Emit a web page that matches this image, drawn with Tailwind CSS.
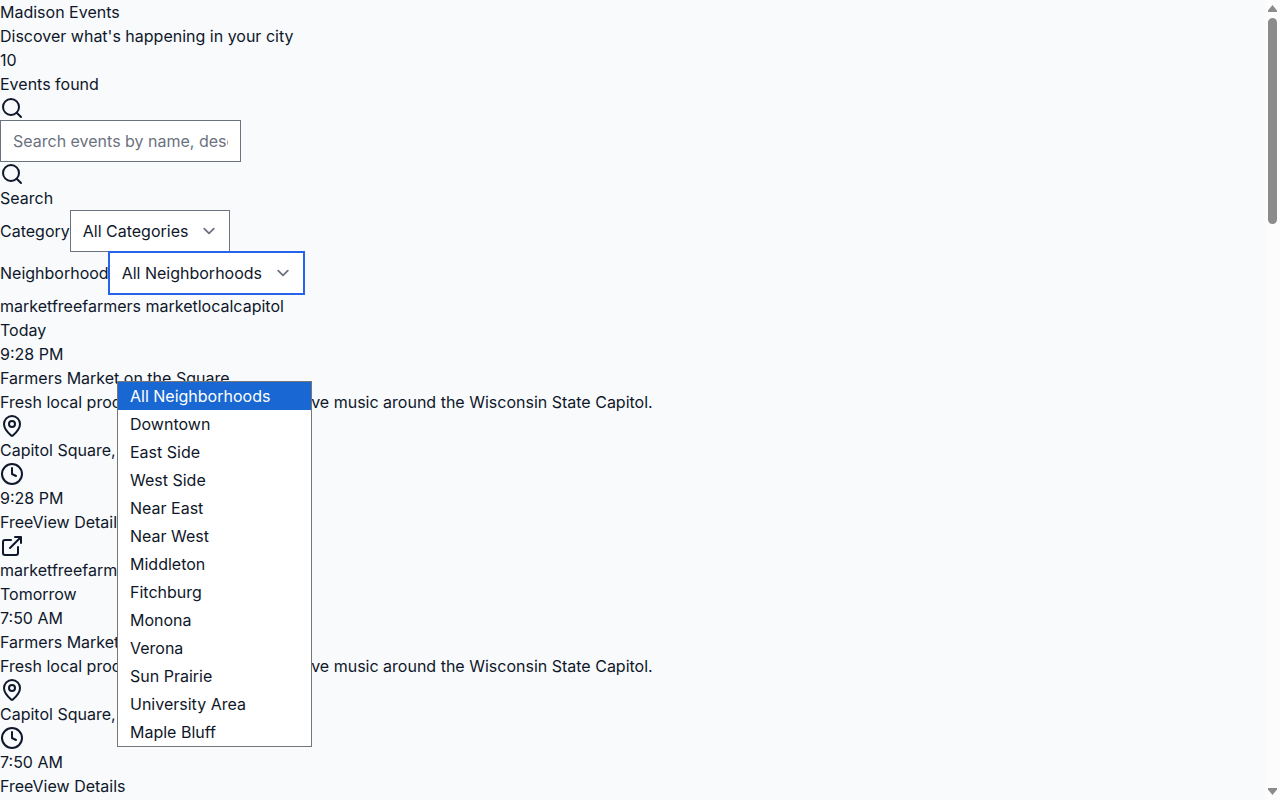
<!DOCTYPE html>
<html lang="en">
<head>
<meta charset="utf-8">
<meta name="viewport" content="width=device-width, initial-scale=1">
<title>Madison Events</title>
<script src="https://cdn.jsdelivr.net/npm/@tailwindcss/browser@4"></script>
</head>
<body class="relative flex h-screen overflow-hidden bg-[#f8fafc] font-['Inter',sans-serif] text-base text-[#0f172a]">
<svg class="hidden" aria-hidden="true">
  <symbol id="search" viewBox="0 0 24 24"><circle cx="11" cy="11" r="8"/><path d="m21 21-4.300-4.300"/></symbol>
  <symbol id="pin" viewBox="0 0 24 24"><path d="M20 10c0 4.993-5.539 10.193-7.399 11.799a1 1 0 0 1-1.202 0C9.539 20.193 4 14.993 4 10a8 8 0 0 1 16 0"/><circle cx="12" cy="10" r="3"/></symbol>
  <symbol id="clock" viewBox="0 0 24 24"><circle cx="12" cy="12" r="10"/><path d="M12 6v6l4 2"/></symbol>
  <symbol id="external" viewBox="0 0 24 24"><path d="M15 3h6v6M10 14 21 3M18 13v6a2 2 0 0 1-2 2H5a2 2 0 0 1-2-2V8a2 2 0 0 1 2-2h6"/></symbol>
  <symbol id="chevron" viewBox="0 0 20 20"><path d="m6 8 4 4 4-4"/></symbol>
</svg>

<div class="min-w-0 flex-1 overflow-hidden">
  <header>
    <h1>Madison Events</h1>
    <p>Discover what's happening in your city</p>
    <div>10</div>
    <div>Events found</div>
  </header>

  <main>
    <form>
      <label for="query" aria-label="Search events" class="block"><svg class="size-6 fill-none stroke-current stroke-2 [stroke-linecap:round] [stroke-linejoin:round]"><use href="#search"/></svg></label>
      <input id="query" type="text" placeholder="Search events by name, description, or venue..." class="block w-[241px] border border-[#6b7280] bg-white px-3 py-2 leading-6 placeholder:text-[#6b7280]">
      <button type="button" class="block text-left"><svg class="size-6 fill-none stroke-current stroke-2 [stroke-linecap:round] [stroke-linejoin:round]"><use href="#search"/></svg>Search</button>

      <div class="flex items-center">
        <label for="category">Category</label>
        <div class="relative">
          <select id="category" class="block appearance-none border border-[#6b7280] bg-white py-2 pr-10 pl-3 leading-6"><option>All Categories</option></select>
          <svg class="pointer-events-none absolute inset-y-0 right-[9px] my-auto size-6 fill-none stroke-[#6b7280] stroke-[1.5] [stroke-linecap:round] [stroke-linejoin:round]"><use href="#chevron"/></svg>
        </div>
      </div>

      <div class="flex items-center">
        <label for="neighborhood">Neighborhood</label>
        <div class="relative">
          <select id="neighborhood" class="block appearance-none border border-[#2563eb] bg-white py-2 pr-10 pl-3 leading-6 ring-1 ring-[#2563eb] outline-none"><option>All Neighborhoods</option><option>Downtown</option><option>East Side</option><option>West Side</option><option>Near East</option><option>Near West</option><option>Middleton</option><option>Fitchburg</option><option>Monona</option><option>Verona</option><option>Sun Prairie</option><option>University Area</option><option>Maple Bluff</option></select>
          <svg class="pointer-events-none absolute inset-y-0 right-[9px] my-auto size-6 fill-none stroke-[#6b7280] stroke-[1.5] [stroke-linecap:round] [stroke-linejoin:round]"><use href="#chevron"/></svg>
        </div>
      </div>
    </form>

    <article>
      <div><span>market</span><span>free</span><span>farmers market</span><span>local</span><span>capitol</span></div>
      <div>Today</div>
      <div>9:28 PM</div>
      <h2>Farmers Market on the Square</h2>
      <p>Fresh local produce, artisan goods, and live music around the Wisconsin State Capitol.</p>
      <svg class="size-6 fill-none stroke-current stroke-2 [stroke-linecap:round] [stroke-linejoin:round]"><use href="#pin"/></svg>
      <div>Capitol Square, Downtown</div>
      <svg class="size-6 fill-none stroke-current stroke-2 [stroke-linecap:round] [stroke-linejoin:round]"><use href="#clock"/></svg>
      <div>9:28 PM</div>
      <div><span>Free</span><a href="#">View Details<svg class="size-6 fill-none stroke-current stroke-2 [stroke-linecap:round] [stroke-linejoin:round]"><use href="#external"/></svg></a></div>
    </article>

    <article>
      <div><span>market</span><span>free</span><span>farmers market</span><span>local</span><span>capitol</span></div>
      <div>Tomorrow</div>
      <div>7:50 AM</div>
      <h2>Farmers Market on the Square</h2>
      <p>Fresh local produce, artisan goods, and live music around the Wisconsin State Capitol.</p>
      <svg class="size-6 fill-none stroke-current stroke-2 [stroke-linecap:round] [stroke-linejoin:round]"><use href="#pin"/></svg>
      <div>Capitol Square, Downtown</div>
      <svg class="size-6 fill-none stroke-current stroke-2 [stroke-linecap:round] [stroke-linejoin:round]"><use href="#clock"/></svg>
      <div>7:50 AM</div>
      <div><span>Free</span><a href="#">View Details<svg class="size-6 fill-none stroke-current stroke-2 [stroke-linecap:round] [stroke-linejoin:round]"><use href="#external"/></svg></a></div>
    </article>
  </main>
</div>

<!-- Page scrollbar -->
<div class="flex w-[15px] shrink-0 flex-col items-center bg-[#fcfcfc] pt-1 pb-1" aria-hidden="true">
  <svg class="h-[9px] w-[9px] shrink-0 fill-[#8b8b8b]" viewBox="0 0 9 9"><path d="M4.500 1 9 6.500V8H0V6.500Z"/></svg>
  <div class="mt-[5px] h-[206px] w-[9px] shrink-0 rounded-full bg-[#8b8b8b]"></div>
  <svg class="mt-auto h-[9px] w-[9px] shrink-0 fill-[#8b8b8b]" viewBox="0 0 9 9"><path d="M0 1h9v1.500L4.500 8 0 2.500Z"/></svg>
</div>

<!-- Open neighborhood list -->
<ul role="listbox" aria-label="Neighborhood" class="absolute top-[381px] left-[117px] w-[195px] border border-[#767676] bg-white leading-7">
  <li role="option" aria-selected="true" class="bg-[#1967d2] px-3 text-white">All Neighborhoods</li>
  <li role="option" class="px-3">Downtown</li>
  <li role="option" class="px-3">East Side</li>
  <li role="option" class="px-3">West Side</li>
  <li role="option" class="px-3">Near East</li>
  <li role="option" class="px-3">Near West</li>
  <li role="option" class="px-3">Middleton</li>
  <li role="option" class="px-3">Fitchburg</li>
  <li role="option" class="px-3">Monona</li>
  <li role="option" class="px-3">Verona</li>
  <li role="option" class="px-3">Sun Prairie</li>
  <li role="option" class="px-3">University Area</li>
  <li role="option" class="px-3">Maple Bluff</li>
</ul>
</body>
</html>
